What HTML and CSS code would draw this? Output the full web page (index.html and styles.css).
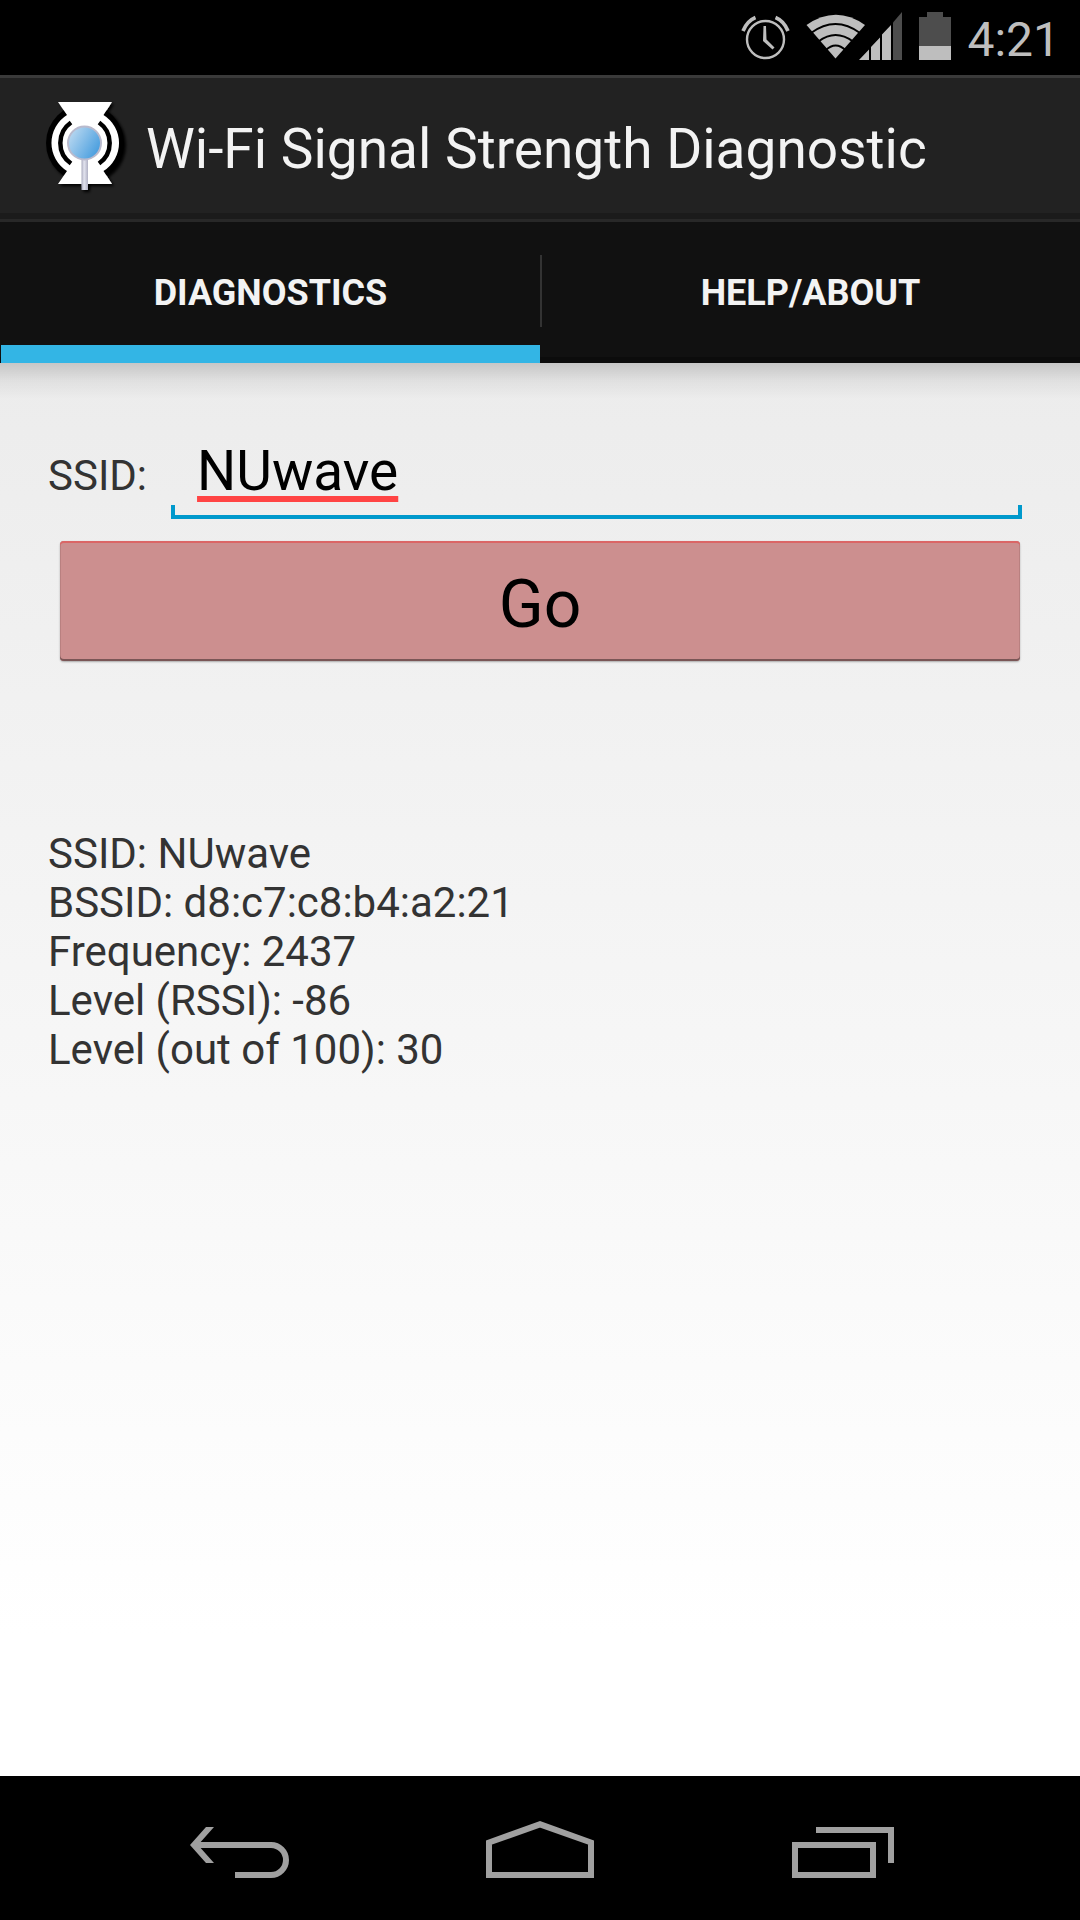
FILE: index.html
```html
<!DOCTYPE html>
<html lang="en">
<head>
<meta charset="utf-8">
<meta name="viewport" content="width=device-width, initial-scale=1">
<title>Wi-Fi Signal Strength Diagnostic</title>
<link rel="stylesheet" href="styles.css">
</head>
<body>
<div class="screen">
  <div class="status-bar">
    <svg class="status-icon alarm" width="50" height="48" viewBox="741 12 50 48" aria-hidden="true">
      <g fill="none" stroke="#bebebe">
        <circle cx="765.5" cy="39.5" r="18.5" stroke-width="2.4"/>
        <path d="M743 31Q747 21 755.500 17.500M788 31Q784 21 775.500 17.500" stroke-width="3.600"/>
      </g>
      <path d="M763.500 26H766L766.500 39.500L774.500 47.500L772.500 49.500L763 41Z" fill="#bebebe"/>
    </svg>
    <svg class="status-icon" width="96" height="48" viewBox="808 12 96 48" aria-hidden="true">
      <path d="M836.500 58.500L807.500 25Q837 4.500 866 25Z" fill="#bebebe"/>
      <g fill="none" stroke="#000" stroke-width="2">
        <path d="M812 33Q836.500 15 861 33M819.500 41.500Q836.500 28.500 854 41.500M826.500 50.500Q836.500 40.500 847 50.500"/>
      </g>
      <path d="M860 60L870 49.500V60ZM872 47L881 37.500V60H872ZM883 34.500L892 25V60H883Z" fill="#bebebe"/>
      <path d="M894 22.500L903 12V60H894Z" fill="#4d4d4d"/>
    </svg>
    <svg class="status-icon" width="32" height="48" viewBox="0 0 32 48" aria-hidden="true">
      <path d="M8 0H24V5H32V48H0V5H8Z" fill="#4d4d4d"/>
      <path d="M0 34H32V48H0Z" fill="#bebebe"/>
    </svg>
    <time class="clock">4:21</time>
  </div>

  <header class="action-bar">
    <svg class="app-icon" width="96" height="96" viewBox="8 18 96 96" aria-hidden="true">
      <defs>
        <linearGradient id="lens" x1="0" y1="0" x2="1" y2="0.600">
          <stop offset="0" stop-color="#c9e0f3"/>
          <stop offset="1" stop-color="#4a9fdf"/>
        </linearGradient>
        <linearGradient id="handle">
          <stop offset="0" stop-color="#a9aabd"/>
          <stop offset="0.400" stop-color="#e3e4ef"/>
          <stop offset="1" stop-color="#b0b1c4"/>
        </linearGradient>
        <filter id="shade" x="-20%" y="-20%" width="150%" height="150%">
          <feDropShadow dx="2" dy="2" stdDeviation="1.500" flood-color="#000"/>
        </filter>
      </defs>
      <g filter="url(#shade)">
        <circle cx="55" cy="63" r="39"/>
        <path d="M28 22H82L73.500 35A33 33 0 0 1 73.500 91L82 104H28L37 91A33 33 0 0 1 37 35Z" fill="#fff"/>
        <path d="M51.500 78H58V110H51.500Z" fill="url(#handle)"/>
      </g>
      <path d="M41 42.500A25 25 0 0 0 41 83.500M69 42.500A25 25 0 0 1 69 83.500" fill="none" stroke="#000" stroke-width="4.500"/>
      <circle cx="54.500" cy="63" r="16.500" fill="url(#lens)" stroke="#b9bacd" stroke-width="2"/>
    </svg>
    <h1 class="app-title">Wi-Fi Signal Strength Diagnostic</h1>
  </header>

  <nav class="tabs" aria-label="Sections">
    <a class="tab tab-active" href="#diagnostics" aria-current="page">DIAGNOSTICS</a>
    <span class="tab-divider"></span>
    <a class="tab" href="#help">HELP/ABOUT</a>
  </nav>

  <main class="content" id="diagnostics">
    <form class="form">
      <div class="field">
        <label class="field-label" for="ssid">SSID:</label>
        <div class="field-box">
          <input class="field-input" id="ssid" type="text" value="NUwave" spellcheck="false">
        </div>
      </div>
      <button class="go" type="button">Go</button>
    </form>
    <div class="results">
      <p>SSID: NUwave</p>
      <p>BSSID: d8:c7:c8:b4:a2:21</p>
      <p>Frequency: 2437</p>
      <p>Level (RSSI): -86</p>
      <p>Level (out of 100): 30</p>
    </div>
  </main>

  <footer class="nav-bar">
    <button class="nav-button" type="button" aria-label="Back">
      <svg width="108" height="60" viewBox="0 0 108 60" aria-hidden="true">
        <path d="M4 27L20 9H28L12 27L28 45H20Z" fill="#a0a0a0"/>
        <path d="M10 27H85A15 15 0 0 1 85 57H49" fill="none" stroke="#a0a0a0" stroke-width="6"/>
      </svg>
    </button>
    <button class="nav-button" type="button" aria-label="Home">
      <svg width="108" height="60" viewBox="0 0 108 60" aria-hidden="true">
        <path d="M3 24.500L54 6.300L105 24.500V57H3Z" fill="none" stroke="#a0a0a0" stroke-width="6"/>
      </svg>
    </button>
    <button class="nav-button" type="button" aria-label="Recent apps">
      <svg width="108" height="60" viewBox="0 0 108 60" aria-hidden="true">
        <path d="M9 27H87V57H9ZM30 12H105V45" fill="none" stroke="#a0a0a0" stroke-width="6"/>
      </svg>
    </button>
  </footer>
</div>
</body>
</html>
```
FILE: styles.css
```css
* {
  box-sizing: border-box;
}

body {
  margin: 0;
  background: #000;
  font-family: Roboto, "Liberation Sans", sans-serif;
}

svg {
  display: block;
  flex: none;
  overflow: visible;
}

.screen {
  display: flex;
  flex-direction: column;
  min-height: 100vh;
}

/* Status bar */
.status-bar {
  display: flex;
  align-items: center;
  justify-content: flex-end;
  gap: 16px;
  height: 75px;
  padding: 0 20px 3px;
  background: #000;
}

.clock {
  color: #bebebe;
  font-size: 48px;
  line-height: 56px;
  padding-top: 8px;
}

/* Action bar */
.action-bar {
  display: flex;
  align-items: center;
  gap: 12px;
  height: 147px;
  padding: 0 38px 6px;
  background: #222;
  border-top: 3px solid #3a3a3a;
  border-bottom: 3px solid #282828;
  box-shadow: inset 0 -6px #1b1b1b;
}

.app-title {
  margin: 0;
  padding-top: 6px;
  color: #f3f3f3;
  font-size: 55px;
  font-weight: 400;
  line-height: 64px;
}

/* Tabs */
.tabs {
  display: flex;
  align-items: stretch;
  height: 141px;
  padding-left: 1px;
  background: #111;
  box-shadow: inset 0 -6px #0c0c0c;
}

.tab {
  display: flex;
  flex: 1;
  align-items: center;
  justify-content: center;
  border-top: 18px solid transparent;
  border-bottom: 18px solid transparent;
  color: #f3f3f3;
  font-size: 36px;
  font-weight: 700;
  text-decoration: none;
}

.tab-active {
  border-bottom: 0;
  padding-bottom: 18px;
  background: linear-gradient(#33b5e5, #33b5e5) bottom / 100% 18px no-repeat;
}

.tab-divider {
  width: 2px;
  margin: 33px -1px 36px 0;
  background: #333;
}

/* Content */
.content {
  flex: 1;
  padding: 72px 48px 48px;
  background:
    linear-gradient(rgba(0, 0, 0, 0.16), rgba(0, 0, 0, 0.05) 50%, transparent) top / 100% 36px no-repeat,
    linear-gradient(#ececec, #fff 90%);
}

.field {
  display: flex;
  align-items: baseline;
  gap: 24px;
  padding-right: 10px;
}

.field-label,
.results {
  color: #333;
  font-size: 42px;
  line-height: 49px;
}

.field-box {
  flex: 1;
  background:
    linear-gradient(#0099cc, #0099cc) left bottom / 4px 14px no-repeat,
    linear-gradient(#0099cc, #0099cc) right bottom / 4px 14px no-repeat,
    linear-gradient(#0099cc, #0099cc) left bottom / 100% 4px no-repeat;
}

.field-input {
  display: block;
  width: 100%;
  height: 84px;
  padding: 0 26px 12px;
  border: 0;
  outline: 0;
  background: none;
  color: #000;
  font: inherit;
  font-size: 55px;
  text-decoration: underline 6px #ff4444;
  text-decoration-skip-ink: none;
  text-underline-offset: 6px;
}

.go {
  display: block;
  width: calc(100% - 24px);
  height: 120px;
  margin: 22px 12px 0;
  padding: 6px 0 0;
  border: 0;
  border-radius: 4px;
  background: #cc8f8f;
  box-shadow:
    inset 0 2px #db6666,
    inset 0 -2px #7a5656,
    inset 1px 0 #b98080,
    inset -1px 0 #b98080,
    0 1px 2px rgba(0, 0, 0, 0.3);
  color: #000;
  font: inherit;
  font-size: 66px;
}

.results {
  margin-top: 168px;
}

.results p {
  margin: 0;
}

/* Navigation bar */
.nav-bar {
  display: flex;
  height: 144px;
  padding: 0 90px;
  background: #000;
}

.nav-button {
  display: flex;
  flex: 1;
  align-items: center;
  justify-content: center;
  padding: 0;
  border: 0;
  background: none;
}
```
